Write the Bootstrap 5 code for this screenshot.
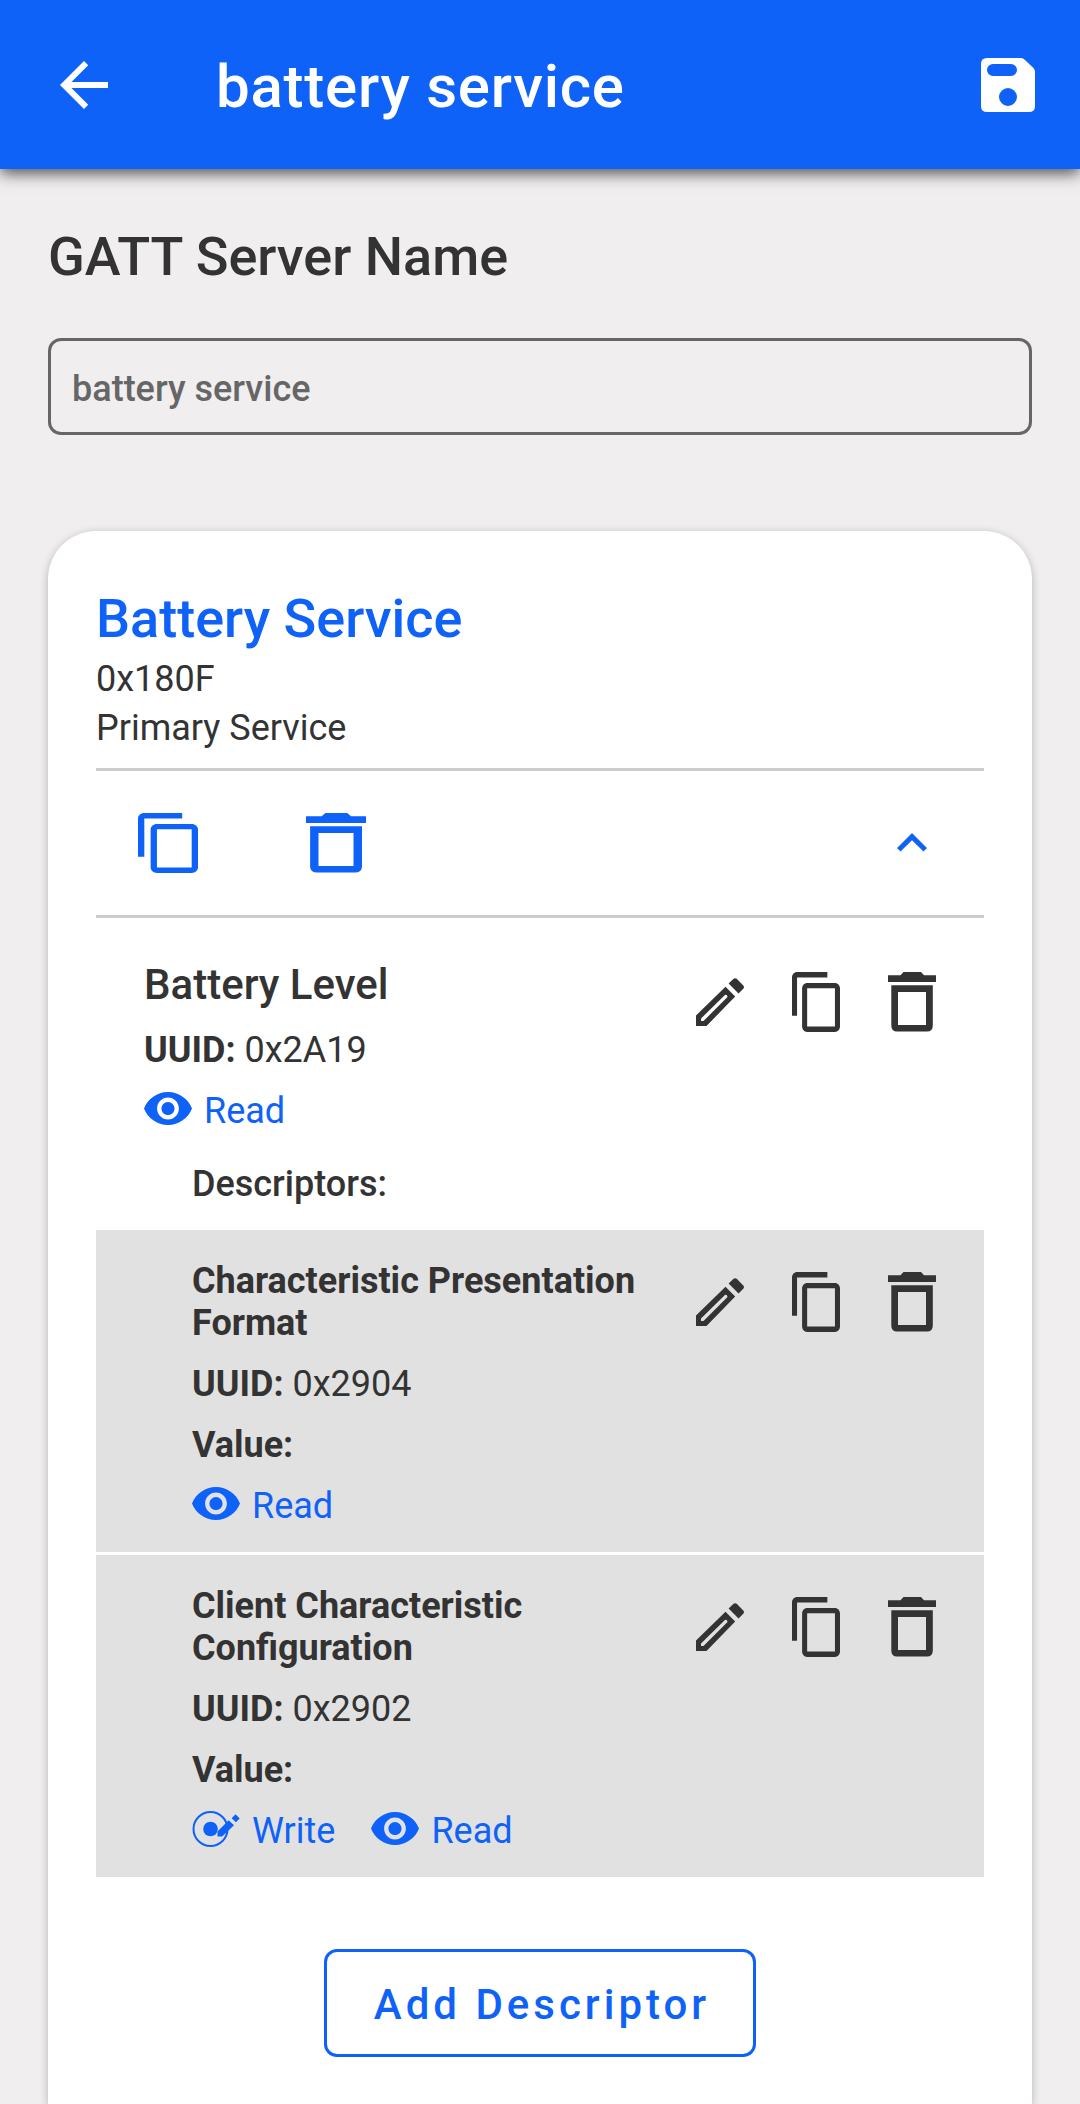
<!DOCTYPE html>
<html lang="en">
<head>
<meta charset="utf-8">
<meta name="viewport" content="width=device-width, initial-scale=1">
<title>battery service</title>
<link rel="stylesheet" href="https://cdn.jsdelivr.net/npm/bootstrap@5.3.0/dist/css/bootstrap.min.css">
<style>
  :root { --brand: #0f62f8; --ink: #333; }
  body { font-family: Roboto, sans-serif; font-size: 36px; line-height: 42px; color: var(--ink); background: #f0eeef; }
  svg { display: block; flex: none; fill: currentColor; }
  .brand-text { color: var(--brand); }
  .plain-btn { border: 0; padding: 0; background: none; color: inherit; }
  .app-bar { height: 169px; padding: 0 36px 0 48px; background: var(--brand); box-shadow: 0 4px 15px rgba(0, 0, 0, .7); z-index: 1; }
  .app-title { font-size: 60px; line-height: 72px; font-weight: 500; letter-spacing: .0125em; margin: 4px 0 0 96px; }
  .page-main { padding: 55px 48px 0; }
  .field-label { font-size: 54px; line-height: 66px; font-weight: 500; margin-bottom: 48px; }
  .name-field, .name-field:focus { height: 97px; padding: 4px 21px 0; border: 3px solid #666; border-radius: 13px; font-size: 36px; font-weight: 500; color: #666; background: transparent; margin-bottom: 96px; }
  .service-card { border: 0; border-radius: 48px 48px 0 0; padding: 52px 48px 47px; box-shadow: 0 2px 8px rgba(0, 0, 0, .25); }
  .service-title { font-size: 54px; line-height: 72px; font-weight: 500; margin: 0; }
  .service-meta { line-height: 49px; margin: 0 0 15px; }
  .service-tools { height: 150px; padding: 0 57px 0 42px; border-top: 3px solid #ccc; border-bottom: 3px solid #ccc; }
  .tool-gap { gap: 108px; }
  .entry { padding: 42px 48px 0; }
  .entry-body { display: flex; flex-direction: column; gap: 19px; }
  .entry-title { font-size: 42px; line-height: 50px; font-weight: 500; margin: 0; }
  .sub-heading { font-size: 36px; line-height: 42px; font-weight: 500; margin: 31px 0 25px 96px; }
  .descriptor { padding: 30px 48px 25px 96px; background: #e1e1e1; }
  .descriptor + .descriptor { margin-top: 3px; }
  .descriptor-title { font-size: 36px; line-height: 42px; font-weight: 700; margin: 0; }
  .entry-actions { gap: 48px; padding-top: 12px; }
  .props { gap: 36px; color: var(--brand); }
  .prop { gap: 12px; }
  .prop svg { margin-bottom: 5px; }
  .add-btn, .add-btn:hover { height: 108px; width: 432px; margin-top: 72px; padding: 4px 0 0 4px; border: 3px solid var(--brand); border-radius: 13px; font-size: 42px; line-height: 50px; font-weight: 500; letter-spacing: 4px; color: var(--brand); background: #fff; }
</style>
<script src="https://cdn.jsdelivr.net/npm/bootstrap@5.3.0/dist/js/bootstrap.bundle.min.js"></script>
</head>
<body>
<svg width="0" height="0" class="position-absolute" aria-hidden="true">
  <symbol id="i-copy" viewBox="2 1 19 22" preserveAspectRatio="none"><path d="M16 1H4c-1.100 0-2 .9-2 2v14h2V3h12V1zm3 4H8c-1.100 0-2 .9-2 2v14c0 1.100.9 2 2 2h11c1.100 0 2-.9 2-2V7c0-1.100-.9-2-2-2zm0 16H8V7h11v14z"/></symbol>
  <symbol id="i-trash" viewBox="0 0 48 60" preserveAspectRatio="none"><path d="M0 3.300H12.500L15.500 0H33L36 3.300H48V10H0zM3.300 13.300H44.800V53.500Q44.800 59.600 39 59.600H9Q3.300 59.600 3.300 53.500zM10 20V53H38V20z" fill-rule="evenodd"/></symbol>
  <symbol id="i-edit" viewBox="0 0 48 48"><path fill-rule="evenodd" d="M0 37.500L29.500 8.700L39.200 18.400L10.500 48H0zM5 40.500V43H7.500L31.500 19Q31.500 16.500 29.200 16.700zM32.600 5.500L37.300 1Q39 -.5 41 1L47.300 7.500Q48.500 9 47.500 10.500L42.500 15.500z"/></symbol>
  <symbol id="i-eye" viewBox="1 4.5 22 15" preserveAspectRatio="none"><path d="M12 4.500C7 4.500 2.730 7.610 1 12c1.730 4.390 6 7.500 11 7.500s9.270-3.110 11-7.500c-1.730-4.390-6-7.500-11-7.500zM12 17c-2.760 0-5-2.240-5-5s2.240-5 5-5 5 2.240 5 5-2.240 5-5 5zm0-8c-1.660 0-3 1.340-3 3s1.340 3 3 3 3-1.340 3-3-1.340-3-3-3z"/></symbol>
  <symbol id="i-write" viewBox="0 0 48 36"><circle cx="18.500" cy="18" r="17" fill="none" stroke="currentColor" stroke-width="2"/><circle cx="18.500" cy="18" r="7.300"/><path d="M25.500 25.500V20.500L36.700 9.200L42 14.200L30.200 25.500zM39.700 7.200L43.500 3.300L47.700 7.500L43.900 11.300z"/></symbol>
</svg>

<div class="d-flex flex-column min-vh-100">
  <header class="app-bar d-flex align-items-center text-white">
    <button type="button" class="plain-btn" aria-label="Back"><svg width="72" height="72" viewBox="0 0 24 24"><path d="M20 11H7.830l5.590-5.590L12 4l-8 8 8 8 1.410-1.410L7.830 13H20v-2z"/></svg></button>
    <h1 class="app-title flex-grow-1">battery service</h1>
    <button type="button" class="plain-btn" aria-label="Save"><svg width="72" height="72" viewBox="-9 -9 72 72"><path fill-rule="evenodd" d="M6 0H40Q42 0 44 2L52.500 10Q54 11.500 54 14V48Q54 54 48 54H6Q0 54 0 48V6Q0 0 6 0zM12 6A6 6 0 0 0 12 18H30A6 6 0 0 0 30 6zM27 30A9 9 0 0 0 27 48A9 9 0 0 0 27 30z"/></svg></button>
  </header>

  <main class="page-main d-flex flex-column flex-grow-1">
    <label for="serverName" class="field-label">GATT Server Name</label>
    <input id="serverName" type="text" class="form-control name-field" value="battery service">

    <section class="card service-card flex-grow-1">
      <h2 class="service-title brand-text">Battery Service</h2>
      <p class="service-meta">0x180F<br>Primary Service</p>

      <div class="service-tools d-flex align-items-center justify-content-between brand-text">
        <div class="d-flex tool-gap">
          <button type="button" class="plain-btn" aria-label="Copy service"><svg width="60" height="60"><use href="#i-copy"/></svg></button>
          <button type="button" class="plain-btn" aria-label="Delete service"><svg width="60" height="60"><use href="#i-trash"/></svg></button>
        </div>
        <button type="button" class="plain-btn" aria-label="Collapse"><svg width="30" height="20" viewBox="0 0 30 20"><path d="M15 0L30 15L26.500 18.500L15 7.200L3.500 18.500L0 15z"/></svg></button>
      </div>

      <article>
        <div class="entry d-flex justify-content-between align-items-start">
          <div class="entry-body">
            <h3 class="entry-title">Battery Level</h3>
            <div><strong>UUID:</strong> 0x2A19</div>
            <div class="props d-flex">
              <span class="prop d-flex align-items-center"><svg width="48" height="33"><use href="#i-eye"/></svg>Read</span>
            </div>
          </div>
          <div class="entry-actions d-flex align-items-center">
            <button type="button" class="plain-btn" aria-label="Edit"><svg width="48" height="48"><use href="#i-edit"/></svg></button>
            <button type="button" class="plain-btn" aria-label="Copy"><svg width="48" height="60"><use href="#i-copy"/></svg></button>
            <button type="button" class="plain-btn" aria-label="Delete"><svg width="48" height="60"><use href="#i-trash"/></svg></button>
          </div>
        </div>

        <h4 class="sub-heading">Descriptors:</h4>

        <div class="descriptor d-flex justify-content-between align-items-start">
          <div class="entry-body">
            <h5 class="descriptor-title">Characteristic Presentation<br>Format</h5>
            <div><strong>UUID:</strong> 0x2904</div>
            <div><strong>Value:</strong></div>
            <div class="props d-flex">
              <span class="prop d-flex align-items-center"><svg width="48" height="33"><use href="#i-eye"/></svg>Read</span>
            </div>
          </div>
          <div class="entry-actions d-flex align-items-center">
            <button type="button" class="plain-btn" aria-label="Edit"><svg width="48" height="48"><use href="#i-edit"/></svg></button>
            <button type="button" class="plain-btn" aria-label="Copy"><svg width="48" height="60"><use href="#i-copy"/></svg></button>
            <button type="button" class="plain-btn" aria-label="Delete"><svg width="48" height="60"><use href="#i-trash"/></svg></button>
          </div>
        </div>

        <div class="descriptor d-flex justify-content-between align-items-start">
          <div class="entry-body">
            <h5 class="descriptor-title">Client Characteristic<br>Configuration</h5>
            <div><strong>UUID:</strong> 0x2902</div>
            <div><strong>Value:</strong></div>
            <div class="props d-flex">
              <span class="prop d-flex align-items-center"><svg width="48" height="36"><use href="#i-write"/></svg>Write</span>
              <span class="prop d-flex align-items-center"><svg width="48" height="33"><use href="#i-eye"/></svg>Read</span>
            </div>
          </div>
          <div class="entry-actions d-flex align-items-center">
            <button type="button" class="plain-btn" aria-label="Edit"><svg width="48" height="48"><use href="#i-edit"/></svg></button>
            <button type="button" class="plain-btn" aria-label="Copy"><svg width="48" height="60"><use href="#i-copy"/></svg></button>
            <button type="button" class="plain-btn" aria-label="Delete"><svg width="48" height="60"><use href="#i-trash"/></svg></button>
          </div>
        </div>

        <div class="text-center">
          <button type="button" class="btn add-btn">Add Descriptor</button>
        </div>
      </article>
    </section>
  </main>
</div>
</body>
</html>
